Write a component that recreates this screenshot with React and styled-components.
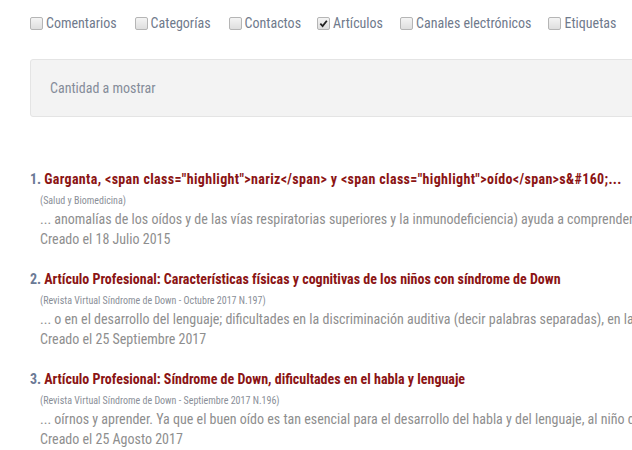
import React from "react";
import styled, { createGlobalStyle } from "styled-components";

const GlobalStyle = createGlobalStyle`
  html, body {
    margin: 0;
    padding: 0;
    background: #fff;
    overflow: hidden;
  }
  body {
    font-family: Roboto, "Liberation Sans", sans-serif;
    font-stretch: condensed;
  }
`;

//  Styled Consts
const Page = styled.div`
  width: 632px;
  height: 450px;
  padding: 14px 0 0 30px;
  box-sizing: border-box;
  overflow: hidden;
`;

const FilterBar = styled.div`
  display: flex;
  align-items: center;
  height: 18px;
`;

const Filter = styled.label`
  display: flex;
  align-items: center;
  margin-right: ${props => props.gap}px;
  font-size: 14px;
  color: #707a8c;
  white-space: nowrap;
`;

const Box = styled.span`
  width: 11px;
  height: 11px;
  border: 1px solid #b5b5b5;
  border-radius: 2px;
  background: linear-gradient(#f4f4f4, #dedede);
  display: inline-flex;
  align-items: center;
  justify-content: center;
  margin-right: 3px;
`;

const ShowBox = styled.div`
  margin-top: 27px;
  height: 58px;
  width: 640px;
  background: #f3f3f3;
  border: 1px solid #e4e4e4;
  border-radius: 3px;
  display: flex;
  align-items: center;
  padding-left: 19px;
  box-sizing: border-box;
  font-size: 14px;
  color: #858c99;
`;

const Results = styled.ol`
  list-style: none;
  margin: 52px 0 0;
  padding: 0;
`;

const Item = styled.li`
  margin-bottom: 20px;
  white-space: nowrap;
`;

const Title = styled.div`
  font-size: 14px;
  font-weight: bold;
  letter-spacing: ${props => props.spacing || 0}px;
  line-height: 20px;
  color: #8b1414;
`;

const Num = styled.span`
  color: #6b7a96;
  letter-spacing: 0;
  margin-right: 3px;
`;

const Body = styled.div`
  padding-left: 10px;
`;

const Source = styled.div`
  font-size: 10px;
  line-height: 17px;
  margin-top: 3px;
  color: #8a8f98;
`;

const Snippet = styled.div`
  font-size: 14px;
  line-height: 20px;
  color: #8e8e8e;
`;

const CheckMark = () => (
  <svg width="9" height="9" viewBox="0 0 10 10">
    <path d="M1.5 5.2 L4 7.8 L8.7 2" fill="none" stroke="#222" strokeWidth="2" />
  </svg>
);

const filters = [
  { label: "Comentarios", gap: 18 },
  { label: "Categorías", gap: 18 },
  { label: "Contactos", gap: 16 },
  { label: "Artículos", checked: true, gap: 17 },
  { label: "Canales electrónicos", gap: 17 },
  { label: "Etiquetas", gap: 0 }
];

const articles = [
  {
    title:
      'Garganta, <span class="highlight">nariz</span> y <span class="highlight">oído</span>s&#160;...',
    spacing: 0.35,
    source: "(Salud y Biomedicina)",
    snippet:
      "... anomalías de los oídos y de las vías respiratorias superiores y la inmunodeficiencia) ayuda a comprender",
    date: "Creado el 18 Julio 2015"
  },
  {
    title:
      "Artículo Profesional: Características físicas y cognitivas de los niños con síndrome de Down",
    source: "(Revista Virtual Síndrome de Down - Octubre 2017 N.197)",
    snippet:
      "... o en el desarrollo del lenguaje; dificultades en la discriminación auditiva (decir palabras separadas), en la",
    date: "Creado el 25 Septiembre 2017"
  },
  {
    title:
      "Artículo Profesional: Síndrome de Down, dificultades en el habla y lenguaje",
    source: "(Revista Virtual Síndrome de Down - Septiembre 2017 N.196)",
    snippet:
      "... oírnos y aprender. Ya que el buen oído es tan esencial para el desarrollo del habla y del lenguaje, al niño de",
    date: "Creado el 25 Agosto 2017"
  }
];

const App = () => (
  <React.Fragment>
    <GlobalStyle />
    <Page>
      <FilterBar>
        {filters.map(f => (
          <Filter key={f.label} gap={f.gap}>
            <Box>{f.checked && <CheckMark />}</Box>
            {f.label}
          </Filter>
        ))}
      </FilterBar>
      <ShowBox>Cantidad a mostrar</ShowBox>
      <Results>
        {articles.map((a, i) => (
          <Item key={i}>
            <Title spacing={a.spacing}>
              <Num>{i + 1}.</Num>
              {a.title}
            </Title>
            <Body>
              <Source>{a.source}</Source>
              <Snippet>{a.snippet}</Snippet>
              <Snippet>{a.date}</Snippet>
            </Body>
          </Item>
        ))}
      </Results>
    </Page>
  </React.Fragment>
);

export default App;
